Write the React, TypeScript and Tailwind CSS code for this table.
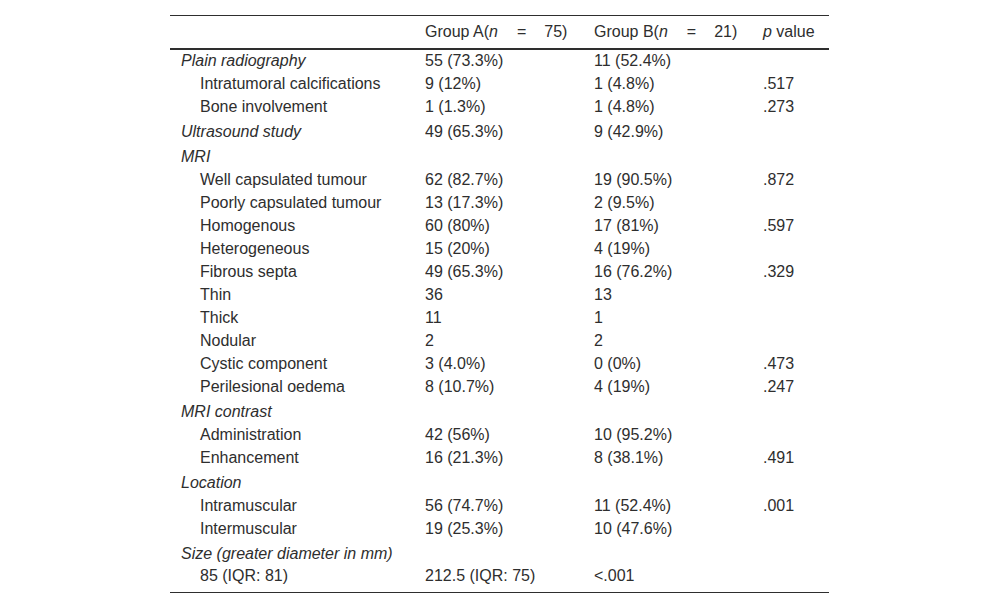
type Row = {
  label: string;
  a?: string;
  b?: string;
  p?: string;
  section?: boolean;
};

const rows: Row[] = [
  { label: "Plain radiography", a: "55 (73.3%)", b: "11 (52.4%)", section: true },
  { label: "Intratumoral calcifications", a: "9 (12%)", b: "1 (4.8%)", p: ".517" },
  { label: "Bone involvement", a: "1 (1.3%)", b: "1 (4.8%)", p: ".273" },
  { label: "Ultrasound study", a: "49 (65.3%)", b: "9 (42.9%)", section: true },
  { label: "MRI", section: true },
  { label: "Well capsulated tumour", a: "62 (82.7%)", b: "19 (90.5%)", p: ".872" },
  { label: "Poorly capsulated tumour", a: "13 (17.3%)", b: "2 (9.5%)" },
  { label: "Homogenous", a: "60 (80%)", b: "17 (81%)", p: ".597" },
  { label: "Heterogeneous", a: "15 (20%)", b: "4 (19%)" },
  { label: "Fibrous septa", a: "49 (65.3%)", b: "16 (76.2%)", p: ".329" },
  { label: "Thin", a: "36", b: "13" },
  { label: "Thick", a: "11", b: "1" },
  { label: "Nodular", a: "2", b: "2" },
  { label: "Cystic component", a: "3 (4.0%)", b: "0 (0%)", p: ".473" },
  { label: "Perilesional oedema", a: "8 (10.7%)", b: "4 (19%)", p: ".247" },
  { label: "MRI contrast", section: true },
  { label: "Administration", a: "42 (56%)", b: "10 (95.2%)" },
  { label: "Enhancement", a: "16 (21.3%)", b: "8 (38.1%)", p: ".491" },
  { label: "Location", section: true },
  { label: "Intramuscular", a: "56 (74.7%)", b: "11 (52.4%)", p: ".001" },
  { label: "Intermuscular", a: "19 (25.3%)", b: "10 (47.6%)" },
  { label: "Size (greater diameter in mm)", section: true },
  { label: "85 (IQR: 81)", a: "212.5 (IQR: 75)", b: "<.001" },
];

function GroupHead({ name, n }: { name: string; n: string }) {
  return (
    <span className="whitespace-nowrap">
      {name}(<i>n</i>
      <span className="ml-[19px]">=</span>
      <span className="ml-[18px]">{n})</span>
    </span>
  );
}

export default function App() {
  return (
    <div className="min-h-[609px] bg-white pt-[15px] text-[16px] leading-[18px] text-[#2e2e2e] font-['Liberation_Sans',Arial,sans-serif]">
      <table className="ml-[170px] w-[659px] border-collapse table-fixed">
        <colgroup>
          <col className="w-[244px]" />
          <col className="w-[169px]" />
          <col className="w-[169px]" />
          <col className="w-[77px]" />
        </colgroup>
        <thead>
          <tr className="h-[33px] border-t border-b-2 border-[#2e2e2e]">
            <th className="px-[11px] text-left font-normal"></th>
            <th className="px-[11px] text-left font-normal">
              <GroupHead name="Group A" n="75" />
            </th>
            <th className="px-[11px] text-left font-normal">
              <GroupHead name="Group B" n="21" />
            </th>
            <th className="px-[11px] text-left font-normal whitespace-nowrap">
              <i>p</i> value
            </th>
          </tr>
        </thead>
        <tbody className="border-b border-[#2e2e2e]">
          {rows.map((r, i) => {
            const last = i === rows.length - 1;
            const h = last
              ? "h-[27px] pb-[5px]"
              : i === 0
              ? "h-[24px]"
              : r.section
              ? "h-[25px] pt-[2px]"
              : "h-[23px]";
            return (
              <tr key={i}>
                <td
                  className={`${h} pr-[11px] align-middle whitespace-nowrap ${
                    r.section ? "pl-[11px] italic" : "pl-[30px]"
                  }`}
                >
                  {r.label}
                </td>
                <td className={`${h} px-[11px] whitespace-nowrap`}>{r.a}</td>
                <td className={`${h} px-[11px] whitespace-nowrap`}>{r.b}</td>
                <td className={`${h} px-[11px] whitespace-nowrap`}>{r.p}</td>
              </tr>
            );
          })}
        </tbody>
      </table>
    </div>
  );
}
